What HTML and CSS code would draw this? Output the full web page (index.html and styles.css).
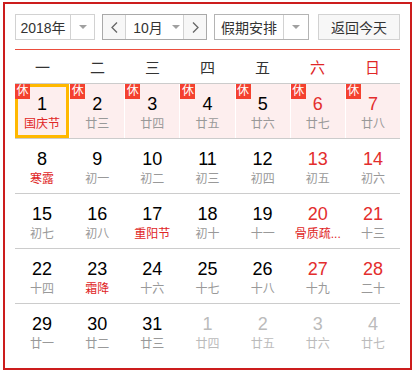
FILE: index.html
```html
<!DOCTYPE html>
<html lang="zh-CN">
<head>
    <meta charset="UTF-8">
    <meta name="viewport" content="width=device-width, initial-scale=1.0">
    <title>万年历</title>
    <link rel="stylesheet" href="styles.css">
</head>
<body>
    <div class="calendar">
        <div class="toolbar">
            <div class="select select-year">
                <span class="select-text">2018年</span>
                <span class="select-arrow"><i class="caret"></i></span>
            </div>
            <div class="month-group">
                <span class="nav-btn">
                    <svg width="7" height="11" viewBox="0 0 7 11"><path d="M6 0.5 L1 5.5 L6 10.5" fill="none" stroke="#666" stroke-width="1.3"/></svg>
                </span>
                <span class="month-select">
                    <span class="select-text">10月</span>
                    <i class="caret"></i>
                </span>
                <span class="nav-btn">
                    <svg width="7" height="11" viewBox="0 0 7 11"><path d="M1 0.5 L6 5.5 L1 10.5" fill="none" stroke="#666" stroke-width="1.3"/></svg>
                </span>
            </div>
            <div class="select select-holiday">
                <span class="select-text">假期安排</span>
                <span class="select-arrow"><i class="caret"></i></span>
            </div>
            <button class="today-btn">返回今天</button>
        </div>

        <div class="weekdays">
            <span>一</span>
            <span>二</span>
            <span>三</span>
            <span>四</span>
            <span>五</span>
            <span class="weekend">六</span>
            <span class="weekend">日</span>
        </div>

        <div class="week week-rest">
            <div class="day rest selected"><span class="badge">休</span><span class="num">1</span><span class="lunar festival">国庆节</span></div>
            <div class="day rest"><span class="badge">休</span><span class="num">2</span><span class="lunar">廿三</span></div>
            <div class="day rest"><span class="badge">休</span><span class="num">3</span><span class="lunar">廿四</span></div>
            <div class="day rest"><span class="badge">休</span><span class="num">4</span><span class="lunar">廿五</span></div>
            <div class="day rest"><span class="badge">休</span><span class="num">5</span><span class="lunar">廿六</span></div>
            <div class="day rest weekend"><span class="badge">休</span><span class="num">6</span><span class="lunar">廿七</span></div>
            <div class="day rest weekend"><span class="badge">休</span><span class="num">7</span><span class="lunar">廿八</span></div>
        </div>

        <div class="week">
            <div class="day"><span class="num">8</span><span class="lunar festival">寒露</span></div>
            <div class="day"><span class="num">9</span><span class="lunar">初一</span></div>
            <div class="day"><span class="num">10</span><span class="lunar">初二</span></div>
            <div class="day"><span class="num">11</span><span class="lunar">初三</span></div>
            <div class="day"><span class="num">12</span><span class="lunar">初四</span></div>
            <div class="day weekend"><span class="num">13</span><span class="lunar">初五</span></div>
            <div class="day weekend"><span class="num">14</span><span class="lunar">初六</span></div>
        </div>

        <div class="week">
            <div class="day"><span class="num">15</span><span class="lunar">初七</span></div>
            <div class="day"><span class="num">16</span><span class="lunar">初八</span></div>
            <div class="day"><span class="num">17</span><span class="lunar festival">重阳节</span></div>
            <div class="day"><span class="num">18</span><span class="lunar">初十</span></div>
            <div class="day"><span class="num">19</span><span class="lunar">十一</span></div>
            <div class="day weekend"><span class="num">20</span><span class="lunar festival">骨质疏...</span></div>
            <div class="day weekend"><span class="num">21</span><span class="lunar">十三</span></div>
        </div>

        <div class="week">
            <div class="day"><span class="num">22</span><span class="lunar">十四</span></div>
            <div class="day"><span class="num">23</span><span class="lunar festival">霜降</span></div>
            <div class="day"><span class="num">24</span><span class="lunar">十六</span></div>
            <div class="day"><span class="num">25</span><span class="lunar">十七</span></div>
            <div class="day"><span class="num">26</span><span class="lunar">十八</span></div>
            <div class="day weekend"><span class="num">27</span><span class="lunar">十九</span></div>
            <div class="day weekend"><span class="num">28</span><span class="lunar">二十</span></div>
        </div>

        <div class="week week-last">
            <div class="day"><span class="num">29</span><span class="lunar">廿一</span></div>
            <div class="day"><span class="num">30</span><span class="lunar">廿二</span></div>
            <div class="day"><span class="num">31</span><span class="lunar">廿三</span></div>
            <div class="day other"><span class="num">1</span><span class="lunar">廿四</span></div>
            <div class="day other"><span class="num">2</span><span class="lunar">廿五</span></div>
            <div class="day other"><span class="num">3</span><span class="lunar">廿六</span></div>
            <div class="day other"><span class="num">4</span><span class="lunar">廿七</span></div>
        </div>
    </div>
</body>
</html>
```

FILE: styles.css
```css
body {
    margin: 0;
    padding: 0;
    background-color: #fff;
    font-family: "Liberation Sans", "Noto Sans CJK SC", sans-serif;
}

.calendar {
    width: 409px;
    box-sizing: border-box;
    margin: 2px 0 0 3px;
    padding: 10px;
    border: 2px solid #cc1d1d;
    background: #fff;
}

/* toolbar */
.toolbar {
    display: flex;
    align-items: center;
    height: 26px;
    padding-bottom: 9px;
    border-bottom: 1px solid #eb4d3d;
}

.select {
    display: flex;
    height: 26px;
    box-sizing: border-box;
    border: 1px solid #d2d2d2;
    background: #fff;
    font-size: 14px;
    color: #333;
}

.select-text {
    flex: 1;
    display: flex;
    align-items: center;
    justify-content: center;
}

.select-arrow {
    width: 23px;
    display: flex;
    align-items: center;
    justify-content: center;
    border-left: 1px solid #d2d2d2;
}

.caret {
    display: block;
    width: 0;
    height: 0;
    border-left: 4px solid transparent;
    border-right: 4px solid transparent;
    border-top: 4px solid #a0a0a0;
}

.select-year {
    width: 80px;
}

.month-group {
    display: flex;
    height: 26px;
    box-sizing: border-box;
    margin-left: 7px;
    border: 1px solid #a9a9a9;
    font-size: 14px;
    color: #333;
}

.nav-btn {
    width: 22px;
    display: flex;
    align-items: center;
    justify-content: center;
    background: #f7f7f7;
}

.month-select {
    width: 59px;
    display: flex;
    align-items: center;
    justify-content: center;
    gap: 9px;
    border-left: 1px solid #d2d2d2;
    border-right: 1px solid #d2d2d2;
    padding-left: 4px;
    box-sizing: border-box;
}

.month-select .select-text {
    flex: none;
}

.select-holiday {
    width: 95px;
    margin-left: 7px;
    border-color: #b4b4b4;
}

.select-holiday .select-arrow {
    width: 24px;
    border-left-color: #d2d2d2;
}

.today-btn {
    width: 82px;
    height: 26px;
    margin-left: 9px;
    border: 1px solid #d2d2d2;
    background: #f7f7f7;
    font-family: inherit;
    font-size: 14px;
    color: #333;
    padding: 0;
}

/* header */
.weekdays {
    display: grid;
    grid-template-columns: repeat(7, 1fr);
    height: 33px;
    border-bottom: 1px solid #ccc;
    font-size: 15px;
    color: #333;
}

.weekdays span {
    display: flex;
    align-items: center;
    justify-content: center;
}

.weekdays .weekend {
    color: #e02626;
}

/* days */
.week {
    display: grid;
    grid-template-columns: repeat(7, 1fr);
    column-gap: 1px;
    height: 54px;
    border-bottom: 1px solid #ccc;
}

.week-last {
    border-bottom: none;
}

.day {
    position: relative;
    display: flex;
    flex-direction: column;
    align-items: center;
    padding-top: 10px;
    box-sizing: border-box;
}

.day.rest {
    background: #fdeeee;
}

.day.selected {
    box-shadow: inset 0 0 0 3px #ffb800;
}

.badge {
    position: absolute;
    left: 0;
    top: 0;
    width: 15px;
    height: 15px;
    background: #f4412f;
    color: #fff;
    font-size: 12px;
    line-height: 15px;
    text-align: center;
}

.num {
    font-size: 18px;
    line-height: 20px;
    color: #000;
}

.lunar {
    margin-top: 2px;
    font-size: 12px;
    line-height: 16px;
    color: #999;
    white-space: nowrap;
}

.lunar.festival {
    color: #e02626;
}

.day.weekend .num {
    color: #e32d2d;
}

.day.other .num,
.day.other .lunar {
    color: #bbb;
}
```
